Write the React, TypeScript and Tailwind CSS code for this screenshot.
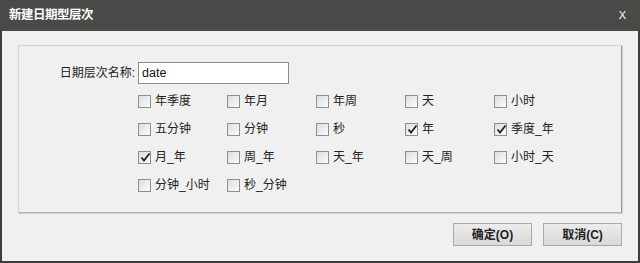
import React from 'react';

/**
 * 新建日期型层次 对话框
 */

interface Option {
  label: string;
  checked?: boolean;
}

const options: Option[] = [
  { label: '年季度' },
  { label: '年月' },
  { label: '年周' },
  { label: '天' },
  { label: '小时' },
  { label: '五分钟' },
  { label: '分钟' },
  { label: '秒' },
  { label: '年', checked: true },
  { label: '季度_年', checked: true },
  { label: '月_年', checked: true },
  { label: '周_年' },
  { label: '天_年' },
  { label: '天_周' },
  { label: '小时_天' },
  { label: '分钟_小时' },
  { label: '秒_分钟' },
];

const font = "font-['Segoe_UI','Liberation_Sans','Noto_Sans_CJK_SC',sans-serif]";

function CheckBox({ checked }: { checked?: boolean }) {
  return (
    <span className="relative w-[13px] h-[13px] border border-[#8f8f8f] bg-gradient-to-br from-[#dedede] to-[#fbfbfb] shrink-0">
      {checked && (
        <svg className="absolute left-[0px] top-[-1px]" width="13" height="13" viewBox="0 0 13 13">
          <path d="M2.5 6.5 L5 9.5 L10.5 2.5" fill="none" stroke="#222" strokeWidth="1.8" />
        </svg>
      )}
    </span>
  );
}

export default function App() {
  return (
    <div className={`w-[640px] h-[263px] flex flex-col ${font} text-[12px] text-[#1e1e1e]`}>
      {/* 标题栏 */}
      <div className="h-[31px] bg-[#4a4a48] flex items-center justify-between pl-[9px] pr-[14px] text-white">
        <span className="text-[12.5px] font-bold tracking-[-0.5px]">新建日期型层次</span>
        <span className="text-[11px]">X</span>
      </div>

      <div className="flex-1 bg-[#f0f0f0] border-x-2 border-b-2 border-[#3c3c3c] flex flex-col">
        {/* 分组面板 */}
        <div className="ml-[16px] mt-[14px] w-[604px] h-[168px] border border-[#d5d5d5] border-r-[#9a9a9a] border-b-[#b0b0b0] shadow-[1px_1px_0_#d0d0d0] pt-[16px]">
          <div className="flex items-center">
            <span className="w-[119px] text-right pr-[3px] text-[#222]">日期层次名称:</span>
            <div className="w-[151px] h-[22px] border border-[#8e8e8e] bg-white flex items-center px-[3px] text-[12.5px] text-[#111]">
              date
            </div>
          </div>

          <div className="ml-[119px] mt-[3px] grid grid-cols-[89px_89px_89px_89px_89px] auto-rows-[28px]">
            {options.map((o) => (
              <div key={o.label} className="flex items-center gap-[4px] text-[#222]">
                <CheckBox checked={o.checked} />
                <span>{o.label}</span>
              </div>
            ))}
          </div>
        </div>

        {/* 按钮 */}
        <div className="flex justify-end gap-[11px] mt-[10px] mr-[16px]">
          <button className="w-[79px] h-[23px] border border-[#a9a9a9] bg-gradient-to-b from-[#ececec] to-[#d9d9d9] font-bold text-[12px] text-[#222]">
            确定(O)
          </button>
          <button className="w-[79px] h-[23px] border border-[#a9a9a9] bg-gradient-to-b from-[#ececec] to-[#d9d9d9] font-bold text-[12px] text-[#222]">
            取消(C)
          </button>
        </div>
      </div>
    </div>
  );
}
